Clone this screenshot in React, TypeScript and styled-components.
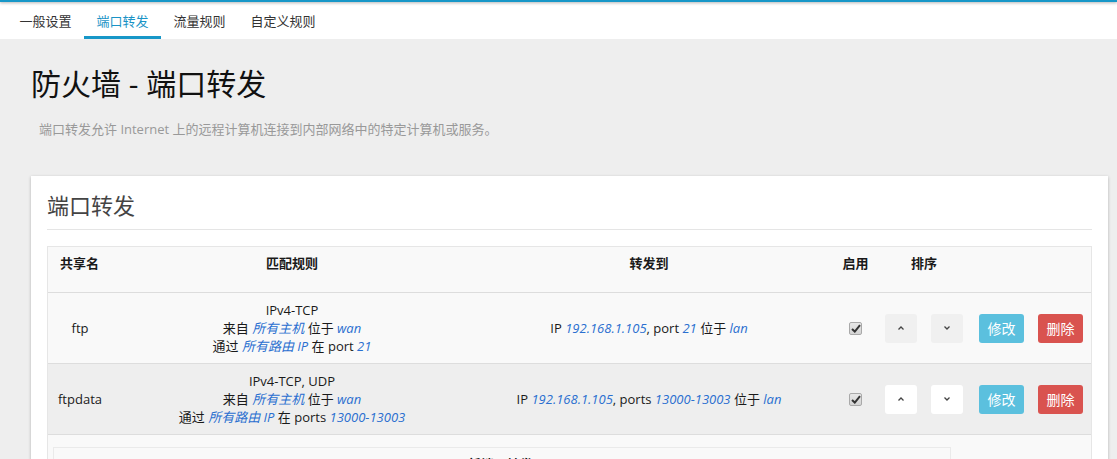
import React from "react";
import styled, { createGlobalStyle } from "styled-components";

const Global = createGlobalStyle`
  html, body { margin: 0; padding: 0; background: #eeeeee; overflow: hidden; }
  body { font-family: "Open Sans", "Noto Sans CJK SC", sans-serif; color: #222; }
  * { box-sizing: border-box; }
`;

const TopLine = styled.div`
  height: 2px;
  background: #1797c8;
  box-shadow: 0 1px 3px rgba(0, 0, 0, 0.35);
  position: relative;
  z-index: 2;
`;

const TabBar = styled.div`
  display: flex;
  background: #fff;
  height: 37px;
  padding-left: 7px;
`;

const Tab = styled.div<{ $active?: boolean }>`
  padding: 0 12.5px;
  display: flex;
  align-items: center;
  font-size: 13px;
  color: ${(p) => (p.$active ? "#1a93c6" : "#333")};
  border-bottom: 3px solid ${(p) => (p.$active ? "#1797c8" : "transparent")};
  padding-top: 2px;
`;

const Main = styled.div`
  padding: 0 9px 0 31px;
`;

const Title = styled.h2`
  margin: 26px 0 0;
  font-size: 30px;
  font-weight: 400;
  line-height: 38px;
  color: #111;
`;

const Desc = styled.div`
  margin: 17px 0 0 8px;
  font-size: 13px;
  line-height: 18px;
  color: #999;
`;

const Card = styled.div`
  margin-top: 38px;
  background: #fff;
  box-shadow: 0 1px 3px rgba(0, 0, 0, 0.25);
  padding: 14px 16px 0;
  height: 400px;
`;

const CardTitle = styled.h3`
  margin: 0;
  font-size: 22px;
  font-weight: 400;
  line-height: 30px;
  color: #444;
  padding-bottom: 9px;
  border-bottom: 1px solid #e5e5e5;
`;

const Table = styled.div`
  margin-top: 16px;
  border: 1px solid #e6e6e6;
  background: #f9f9f9;
`;

const Row = styled.div<{ $bg: string; $head?: boolean }>`
  display: grid;
  grid-template-columns: 64px 360px 354px 59px 1fr;
  background: ${(p) => p.$bg};
  border-bottom: 1px solid #dddddd;
  min-height: ${(p) => (p.$head ? "46px" : "71px")};
  font-size: 13px;
  color: #1a1a1a;
`;

const Th = styled.div<{ $align?: string; $pad?: number }>`
  font-weight: 700;
  font-size: 13px;
  padding-top: 7px;
  line-height: 18px;
  text-align: ${(p) => p.$align || "center"};
  padding-left: ${(p) => (p.$pad ?? 0)}px;
`;

const Td = styled.div`
  display: flex;
  flex-direction: column;
  align-items: center;
  justify-content: center;
  text-align: center;
  line-height: 18px;
  padding: 8px 0;
`;

const Var = styled.em`
  color: #2a6fd0;
  font-style: italic;
`;

const Actions = styled.div`
  display: flex;
  align-items: center;
`;

const SortBtn = styled.div<{ $bg: string }>`
  width: 32px;
  height: 29px;
  border-radius: 3px;
  background: ${(p) => p.$bg};
  display: flex;
  align-items: center;
  justify-content: center;
  margin-right: 14px;
`;

const ActBtn = styled.div<{ $bg: string; $gap: number }>`
  width: 45px;
  height: 29px;
  border-radius: 3px;
  background: ${(p) => p.$bg};
  color: #fff;
  font-size: 14px;
  display: flex;
  align-items: center;
  justify-content: center;
  margin-left: ${(p) => p.$gap}px;
`;

const Check = styled.span`
  width: 13px;
  height: 13px;
  border: 1px solid #a9a9a9;
  border-radius: 2px;
  background: linear-gradient(#e6e6e6, #d4d4d4);
  display: flex;
  align-items: center;
  justify-content: center;
`;

const CreateWrap = styled.div`
  padding: 12px 140px 0 5px;
  height: 60px;
`;

const CreateBox = styled.div`
  border: 1px solid #eaeaea;
  border-bottom: none;
  height: 40px;
  text-align: center;
  font-weight: 700;
  font-size: 13px;
  padding-top: 6px;
  color: #111;
`;

const Up = () => (
  <svg width="8" height="6" viewBox="0 0 8 6">
    <polyline points="1.5,4.5 4,2 6.5,4.5" fill="none" stroke="#444" strokeWidth="1.3" />
  </svg>
);
const Down = () => (
  <svg width="8" height="6" viewBox="0 0 8 6">
    <polyline points="1.5,1.5 4,4 6.5,1.5" fill="none" stroke="#444" strokeWidth="1.3" />
  </svg>
);

const Tick = () => (
  <svg width="10" height="9" viewBox="0 0 10 9">
    <path d="M1 5 L3.8 7.6 L9 1.2" fill="none" stroke="#333" strokeWidth="2" />
  </svg>
);

type R = {
  name: string;
  proto: string;
  portLabel: string;
  port: string;
  toLabel: string;
  bg: string;
  btnBg: string;
};

const rows: R[] = [
  { name: "ftp", proto: "IPv4-TCP", portLabel: "port", port: "21", toLabel: "port", bg: "#f9f9f9", btnBg: "#f0f0f0" },
  { name: "ftpdata", proto: "IPv4-TCP, UDP", portLabel: "ports", port: "13000-13003", toLabel: "ports", bg: "#eeeeee", btnBg: "#ffffff" },
];

export default function App() {
  return (
    <>
      <Global />
      <TopLine />
      <TabBar>
        <Tab>一般设置</Tab>
        <Tab $active>端口转发</Tab>
        <Tab>流量规则</Tab>
        <Tab>自定义规则</Tab>
      </TabBar>
      <Main>
        <Title>防火墙 - 端口转发</Title>
        <Desc>端口转发允许 Internet 上的远程计算机连接到内部网络中的特定计算机或服务。</Desc>
        <Card>
          <CardTitle>端口转发</CardTitle>
          <Table>
            <Row $bg="#f9f9f9" $head>
              <Th $align="left" $pad={12}>共享名</Th>
              <Th>匹配规则</Th>
              <Th>转发到</Th>
              <Th>启用</Th>
              <Th $align="left" $pad={26}>排序</Th>
            </Row>
            {rows.map((r) => (
              <Row key={r.name} $bg={r.bg}>
                <Td>{r.name}</Td>
                <Td>
                  <span>{r.proto}</span>
                  <span>
                    来自 <Var>所有主机</Var> 位于 <Var>wan</Var>
                  </span>
                  <span>
                    通过 <Var>所有路由 IP</Var> 在 {r.portLabel} <Var>{r.port}</Var>
                  </span>
                </Td>
                <Td>
                  <span>
                    IP <Var>192.168.1.105</Var>, {r.toLabel} <Var>{r.port}</Var> 位于 <Var>lan</Var>
                  </span>
                </Td>
                <Td>
                  <Check>
                    <Tick />
                  </Check>
                </Td>
                <Actions>
                  <SortBtn $bg={r.btnBg}>
                    <Up />
                  </SortBtn>
                  <SortBtn $bg={r.btnBg}>
                    <Down />
                  </SortBtn>
                  <ActBtn $bg="#5bc0de" $gap={2}>修改</ActBtn>
                  <ActBtn $bg="#d9534f" $gap={14}>删除</ActBtn>
                </Actions>
              </Row>
            ))}
            <CreateWrap>
              <CreateBox>新端口转发:</CreateBox>
            </CreateWrap>
          </Table>
        </Card>
      </Main>
    </>
  );
}
